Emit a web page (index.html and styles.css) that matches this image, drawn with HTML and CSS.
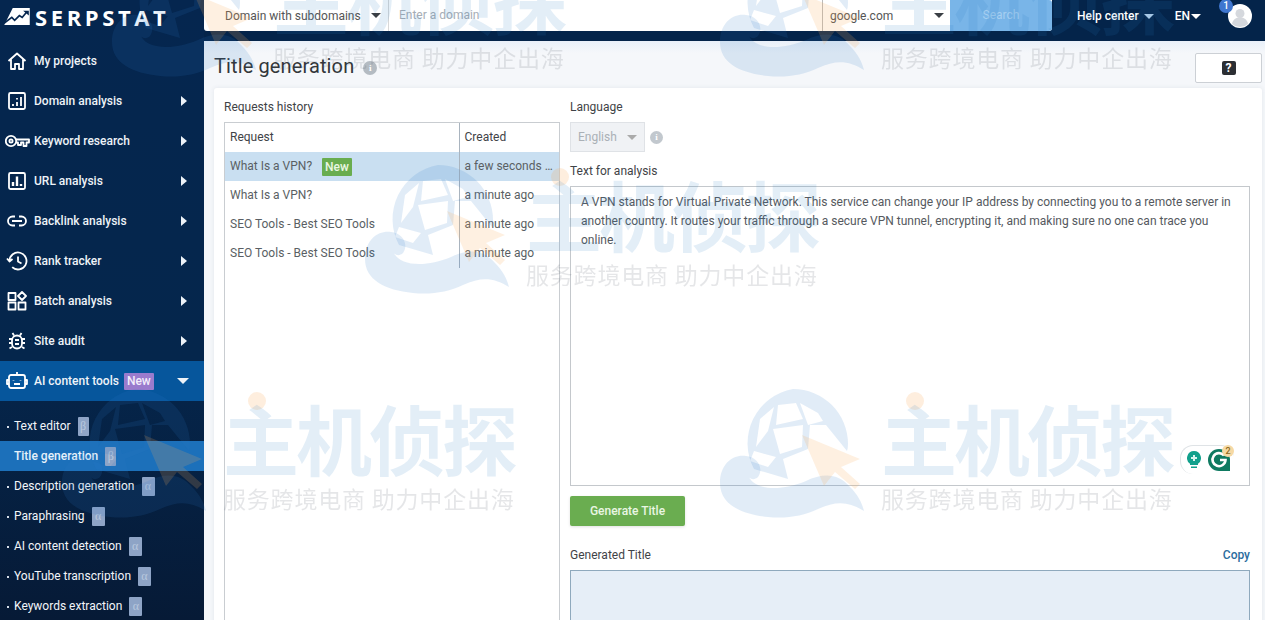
FILE: index.html
```html
<!DOCTYPE html>
<html lang="en">
<head>
<meta charset="utf-8">
<title>Title generation</title>
<link rel="stylesheet" href="styles.css">
</head>
<body>
<svg class="defs" width="0" height="0" aria-hidden="true">
  <symbol id="wm-globe" viewBox="0 0 155 130">
    <path class="wm-blue" fill-rule="evenodd" d="M75 0a55 55 0 0 1 55 55q0 4-1 7L108 36H92l-2 24-25 10 5 20-34-10a55 55 0 0 1 39-80zM42 30l14-12-6 24-12 16zM60 16l18-2 7 16-27 6zM82 14l18 10 5 8-15 4zM55 40l30-4-1 22-22 7zM36 62l22 6-8 10-18-6z"/>
    <path class="wm-blue" d="M2 94C2 75 15 65 28 67c12 1 18 13 12 21-4 4-10 2-10-3 3 15 30 19 58 7 17-8 32-8 44 6 8 8 12 16 14 24-16-10-28-10-46-2-15 7-32 10-50 8C22 125 2 115 2 94z"/>
    <path class="wm-orange" d="M84 46l58 24-19 8 19 17-5 5-20-17-11 14z"/>
  </symbol>
</svg>

<div class="app">
  <aside class="sidebar">
    <div class="logo">
      <svg class="logo-mark" viewBox="0 0 27 18"><path fill="#fff" d="M9 0h18v18H0z"/><path fill="none" stroke="#05264f" stroke-width="1.800" d="M0 16l8-6 3 3 5-5 3 2 5-6"/><path fill="#05264f" d="M20 3h6v5z"/></svg>
      <span class="logo-text">SERPSTAT</span>
    </div>
    <nav class="nav">
      <a class="nav-item">
        <span class="nav-icon"><svg viewBox="0 0 20 20"><path d="M1.500 10 10 2.500l8.500 7.500M4 8.500V18h4v-5h4v5h4V8.500"/></svg></span>
        <span class="nav-label">My projects</span>
      </a>
      <a class="nav-item">
        <span class="nav-icon"><svg viewBox="0 0 20 20"><rect x="2" y="2" width="16" height="16" rx="1.500"/><path d="M6 15v-2M10 15v-4M14 15V6M10 8.500V7"/></svg></span>
        <span class="nav-label">Domain analysis</span><i class="caret"></i>
      </a>
      <a class="nav-item">
        <span class="nav-icon nav-icon-wide"><svg viewBox="0 0 25 14"><circle cx="6" cy="7" r="5.200"/><circle cx="6" cy="7" r="1.600"/><path d="M11 5.500h13v3h-2.500V12h-3V8.500H16V11h-3V8.500h-2"/></svg></span>
        <span class="nav-label">Keyword research</span><i class="caret"></i>
      </a>
      <a class="nav-item">
        <span class="nav-icon"><svg viewBox="0 0 20 20"><rect x="2" y="2" width="16" height="16" rx="1.500"/><path class="thick" d="M6 15v-4M10 15V5.500M14 15v-2"/></svg></span>
        <span class="nav-label">URL analysis</span><i class="caret"></i>
      </a>
      <a class="nav-item">
        <span class="nav-icon"><svg viewBox="0 0 20 20"><path d="M8 5.500H5.500a4.500 4.500 0 0 0 0 9H8M12 5.500h2.500a4.500 4.500 0 0 1 0 9H12M5 10h10"/></svg></span>
        <span class="nav-label">Backlink analysis</span><i class="caret"></i>
      </a>
      <a class="nav-item">
        <span class="nav-icon nav-icon-mid"><svg viewBox="0 0 22 20"><path d="M3.500 10a8.500 8.500 0 1 1 2.700 6.200M1 7.500l2.500 3 3-2.500M12 5.500V10.500l3.500 2"/></svg></span>
        <span class="nav-label">Rank tracker</span><i class="caret"></i>
      </a>
      <a class="nav-item">
        <span class="nav-icon"><svg viewBox="0 0 20 20"><rect x="1.500" y="2" width="7" height="7"/><rect x="1.500" y="11.500" width="7" height="7"/><rect x="11.500" y="11.500" width="7" height="7"/><path d="m15 1 4 4-4 4-4-4z"/></svg></span>
        <span class="nav-label">Batch analysis</span><i class="caret"></i>
      </a>
      <a class="nav-item">
        <span class="nav-icon"><svg viewBox="0 0 20 20"><rect x="5" y="4.500" width="10" height="13" rx="5"/><path d="M7 4.500 5.500 2M13 4.500 14.500 2M5 8H2M15 8h3M5 12H2M15 12h3M5 16l-2.500 1.500M15 16l2.500 1.500M8 9h4M8 13h4"/></svg></span>
        <span class="nav-label">Site audit</span><i class="caret"></i>
      </a>
      <a class="nav-item nav-item-open">
        <span class="nav-icon nav-icon-mid"><svg viewBox="0 0 22 20"><rect x="3" y="4" width="16" height="13" rx="2"/><path d="M11 1v3M3 9H1v4h2M19 9h2v4h-2M7.500 9.500v.5M14.500 9.500v.5M8 13h6"/></svg></span>
        <span class="nav-label">AI content tools<b class="tag-new">New</b></span><i class="caret caret-down"></i>
      </a>
    </nav>
    <ul class="subnav">
      <li class="sub-item"><span>Text editor</span><em class="tag-ver tag-beta">β</em></li>
      <li class="sub-item sub-item-active"><span>Title generation</span><em class="tag-ver tag-beta">β</em></li>
      <li class="sub-item"><span>Description generation</span><em class="tag-ver">α</em></li>
      <li class="sub-item"><span>Paraphrasing</span><em class="tag-ver">α</em></li>
      <li class="sub-item"><span>AI content detection</span><em class="tag-ver">α</em></li>
      <li class="sub-item"><span>YouTube transcription</span><em class="tag-ver">α</em></li>
      <li class="sub-item"><span>Keywords extraction</span><em class="tag-ver">α</em></li>
    </ul>
  </aside>

  <div class="main">
    <header class="topbar">
      <div class="search-form">
        <div class="scope"><span>Domain with subdomains</span><i class="arrow"></i></div>
        <div class="domain">Enter a domain</div>
        <div class="engine"><span>google.com</span><i class="arrow"></i></div>
        <div class="search-btn">Search</div>
      </div>
      <div class="top-actions">
        <span class="top-link help">Help center<i class="arrow arrow-light"></i></span>
        <span class="top-link lang">EN<i class="arrow arrow-white"></i></span>
        <span class="avatar">
          <svg viewBox="0 0 24 24"><circle cx="12" cy="12" r="12" fill="#fff"/><circle cx="12" cy="9.500" r="4.500" fill="#d5d8dd"/><path fill="#d5d8dd" d="M4 20c1-5 4-6.500 8-6.500S19 15 20 20a12 12 0 0 1-16 0z"/></svg>
          <b class="avatar-badge">1</b>
        </span>
      </div>
    </header>

    <main class="content">
      <div class="title-row">
        <h1 class="page-title">Title generation</h1>
        <i class="info info-title">i</i>
        <button class="help-btn"><span>?</span></button>
      </div>

      <section class="card">
        <div class="col-left">
          <div class="label">Requests history</div>
          <div class="history">
            <table class="history-table">
              <thead>
                <tr><th class="col-req">Request</th><th class="col-created">Created</th></tr>
              </thead>
              <tbody>
                <tr class="row-active"><td class="col-req">What Is a VPN?<b class="tag-fresh">New</b></td><td class="col-created">a few seconds ago</td></tr>
                <tr><td class="col-req">What Is a VPN?</td><td class="col-created">a minute ago</td></tr>
                <tr><td class="col-req">SEO Tools - Best SEO Tools</td><td class="col-created">a minute ago</td></tr>
                <tr><td class="col-req">SEO Tools - Best SEO Tools</td><td class="col-created">a minute ago</td></tr>
              </tbody>
            </table>
          </div>
        </div>

        <div class="col-right">
          <div class="label">Language</div>
          <div class="lang-row">
            <div class="lang-select"><span>English</span><i class="arrow arrow-grey"></i></div>
            <i class="info">i</i>
          </div>
          <div class="label label-text">Text for analysis</div>
          <div class="analysis">
            A VPN stands for Virtual Private Network. This service can change your IP address by connecting you to a remote server in another country. It routes your traffic through a secure VPN tunnel, encrypting it, and making sure no one can trace you online.
            <div class="grammarly">
              <svg class="g-bulb" viewBox="0 0 14 18"><path fill="#11a08c" d="M7 0a7 7 0 0 1 4 12.700V14H3v-1.300A7 7 0 0 1 7 0zM4 15.500h6V17H4z"/><path fill="#d8f3ee" d="M6 4h2v2h2v2H8v2H6V8H4V6h2z"/></svg>
              <span class="g-logo">
                <svg viewBox="0 0 22 22"><path fill="#0f7a61" d="M11 0a11 11 0 0 1 11 11v11H11a11 11 0 0 1 0-22z"/><path fill="none" stroke="#fff" stroke-width="2.600" d="M16 6.500a6.500 6.500 0 1 0 1.500 4.500H12"/></svg>
                <b class="g-count">2</b>
              </span>
            </div>
          </div>
          <button class="generate">Generate Title</button>
          <div class="label-row">
            <span class="label-plain">Generated Title</span>
            <a class="copy">Copy</a>
          </div>
          <div class="result"></div>
        </div>
      </section>
    </main>
  </div>
</div>

<div class="watermarks" aria-hidden="true">
  <div class="wm wm-a"><svg class="wm-mark"><use href="#wm-globe"/></svg><i class="wm-dot"></i><div class="wm-text"><div class="wm-main">主机侦探</div><div class="wm-sub">服务跨境电商 助力中企出海</div></div></div>
  <div class="wm wm-b"><svg class="wm-mark"><use href="#wm-globe"/></svg><i class="wm-dot"></i><div class="wm-text"><div class="wm-main">主机侦探</div><div class="wm-sub">服务跨境电商 助力中企出海</div></div></div>
  <div class="wm wm-c"><svg class="wm-mark"><use href="#wm-globe"/></svg><i class="wm-dot"></i><div class="wm-text"><div class="wm-main">主机侦探</div><div class="wm-sub">服务跨境电商 助力中企出海</div></div></div>
  <div class="wm wm-d"><svg class="wm-mark"><use href="#wm-globe"/></svg><i class="wm-dot"></i><div class="wm-text"><div class="wm-main">主机侦探</div><div class="wm-sub">服务跨境电商 助力中企出海</div></div></div>
  <div class="wm wm-e"><svg class="wm-mark"><use href="#wm-globe"/></svg><i class="wm-dot"></i><div class="wm-text"><div class="wm-main">主机侦探</div><div class="wm-sub">服务跨境电商 助力中企出海</div></div></div>
</div>
</body>
</html>
```
FILE: styles.css
```css
* { box-sizing: border-box; }
html, body { margin: 0; height: 100%; overflow: hidden; }
body { font: 12px/16px Roboto, "Liberation Sans", sans-serif; color: #3c4043; background: #f4f6f9; }
.defs { position: absolute; }
.app { display: flex; height: 620px; overflow: hidden; }

/* sidebar */
.sidebar { width: 204px; flex: none; color: #fff; background: linear-gradient(#05264f 0, #05264c 360px, #061a36 100%); overflow: hidden; }
.logo { height: 41px; display: flex; align-items: flex-start; padding: 8px 0 0 4px; }
.logo-mark { width: 26px; height: 17px; }
.logo-text { font: 700 22px/18px "Open Sans", Roboto, sans-serif; letter-spacing: 3.600px; margin-left: 5px; }
.nav-item { height: 40px; display: flex; align-items: center; padding-right: 17px; font-weight: 500; color: #eef3f8; }
.nav-icon { width: 34px; flex: none; display: flex; justify-content: center; }
.nav-icon svg { width: 20px; height: 20px; fill: none; stroke: #fff; stroke-width: 1.800; stroke-linejoin: round; }
.nav-icon .thick { stroke-width: 2.400; }
.nav-icon-wide svg { width: 25px; }
.nav-icon-mid svg { width: 22px; }
.nav-label { flex: 1; white-space: nowrap; }
.caret { width: 0; height: 0; border-left: 6px solid #eef3f8; border-top: 5px solid transparent; border-bottom: 5px solid transparent; }
.caret-down { border-left: 6px solid transparent; border-right: 6px solid transparent; border-top: 6px solid #eef3f8; border-bottom: 0; margin-right: -2px; }
.nav-item-open { background: #06569c; }
.tag-new { display: inline-block; margin-left: 5px; padding: 0 3px; height: 17px; line-height: 17px; background: #9a7bcd; color: #f3edfb; font-weight: 500; border-radius: 1px; }
.subnav { list-style: none; margin: 0; padding: 10px 0 0; }
.sub-item { height: 30px; display: flex; align-items: center; padding-left: 14px; color: #f2f5f9; position: relative; white-space: nowrap; }
.sub-item::before { content: ""; position: absolute; left: 7px; top: 15px; width: 2px; height: 2px; background: #d5dde8; }
.sub-item-active { background: #1c70ba; font-weight: 500; color: #e6f1fb; }
.sub-item-active::before { display: none; }
.tag-ver { width: 13px; height: 19px; margin-left: 7px; background: #8ea4c6; color: #b9c8de; font: 12px/19px "Liberation Serif", serif; text-align: center; border-radius: 1px; }
.tag-beta { width: 11px; }

/* top bar */
.main { flex: 1; min-width: 0; display: flex; flex-direction: column; }
.topbar { height: 41px; flex: none; display: flex; background: #04244a; color: #fff; }
.search-form { width: 848px; height: 31px; display: flex; background: #fff; color: #555; border-radius: 0 0 3px 3px; overflow: hidden; }
.scope { width: 184px; padding-left: 21px; display: flex; align-items: center; justify-content: space-between; padding-right: 7px; }
.domain { flex: 1; border-left: 1px solid #d8d8d8; padding-left: 10px; line-height: 31px; color: #a6adb5; }
.engine { width: 128px; border-left: 1px solid #bbb; padding: 0 6px 0 7px; display: flex; align-items: center; justify-content: space-between; }
.search-btn { width: 102px; background: #79b5e8; color: #a6cff1; text-align: center; line-height: 31px; border-radius: 0 3px 3px 0; }
.arrow { display: inline-block; width: 0; height: 0; border-left: 5px solid transparent; border-right: 5px solid transparent; border-top: 5px solid #3a3f45; }
.arrow-light { border-top-color: #b9d4ec; margin-left: 5px; }
.arrow-white { border-top-color: #fff; margin-left: 1px; }
.arrow-grey { border-top-color: #aaa; }
.top-actions { flex: 1; display: flex; align-items: flex-start; padding: 8px 0 0 25px; }
.top-link { white-space: nowrap; display: flex; align-items: center; height: 16px; font-weight: 500; }
.lang { margin-left: 21px; }
.avatar { position: relative; margin: -4px 0 0 27px; width: 24px; height: 24px; }
.avatar svg { width: 24px; height: 24px; display: block; }
.avatar-badge { position: absolute; left: -9px; top: -5px; width: 14px; height: 14px; border-radius: 50%; background: #3f76cf; font: 500 10px/14px Roboto, sans-serif; text-align: center; }

/* content */
.content { flex: 1; min-height: 0; padding: 0 3px 0 10px; background: linear-gradient(#e9f0f9 0, #f5f7fa 12px); }
.title-row { height: 47px; display: flex; align-items: center; padding-top: 3px; }
.page-title { margin: 0; font: 400 20px/26px Roboto, sans-serif; color: #33373b; letter-spacing: .12px; }
.info { width: 14px; height: 14px; border-radius: 50%; background: #c2c8ce; color: #fff; font: 700 9px/14px "Liberation Serif", serif; text-align: center; display: block; flex: none; }
.info-title { margin: 3px 0 0 9px; background: #b4bbc2; }
.help-btn { margin: 4px 0 0 auto; width: 67px; height: 30px; background: #fff; border: 1px solid #ccd0d5; border-radius: 2px; padding: 0; display: flex; align-items: center; justify-content: center; }
.help-btn span { width: 14px; height: 14px; border-radius: 2px; background: #2b2e33; color: #fff; font: 700 12px/14px Roboto, sans-serif; }
.card { display: flex; gap: 10px; height: 600px; padding: 0 12px 0 10px; background: #fff; border-radius: 3px; box-shadow: 0 0 4px rgba(60, 80, 110, .1); }
.label { padding-top: 11px; margin-bottom: 7px; line-height: 16px; color: #3f4347; }
.col-left { width: 336px; flex: none; }
.col-right { flex: 1; min-width: 0; }
.history { height: 520px; border: 1px solid #c9cdd1; }
.history-table { width: 100%; table-layout: fixed; border-collapse: collapse; }
.history-table th, .history-table td { height: 29px; padding: 0 5px 2px; font-weight: 400; text-align: left; white-space: nowrap; overflow: hidden; text-overflow: ellipsis; color: #5a5f64; }
.history-table th { color: #3f4347; }
.col-req { width: 234px; }
.col-created { border-left: 1px solid #a9b4bf; }
.row-active td { background: #c9dff1; }
.history-table .row-active .col-req { padding-bottom: 0; }
.tag-fresh { display: inline-block; margin-left: 10px; padding: 0 3px; height: 18px; line-height: 18px; background: #69ad4f; color: #e9f7e2; font-weight: 500; border-radius: 1px; vertical-align: middle; }
.lang-row { display: flex; align-items: center; height: 30px; }
.lang-select { width: 75px; height: 30px; background: #f0f2f5; border: 1px solid #dfe2e6; padding: 0 7px; display: flex; align-items: center; justify-content: space-between; color: #aab0b6; }
.lang-row .info { margin-left: 5px; width: 13px; height: 13px; line-height: 13px; }
.analysis { position: relative; height: 300px; border: 1px solid #c4c8cc; padding: 6px 10px; line-height: 19px; color: #55595e; }
.grammarly { position: absolute; right: 15px; bottom: 11px; width: 54px; height: 29px; display: flex; align-items: center; gap: 7px; padding-left: 6px; background: #fff; border: 1px solid #dfe3e6; border-radius: 13px 13px 0 13px; border-right: 0; border-bottom: 0; }
.g-bulb { width: 14px; height: 18px; }
.g-logo { position: relative; width: 22px; height: 22px; }
.g-logo svg { width: 22px; height: 22px; display: block; }
.g-count { position: absolute; right: -4px; top: -4px; width: 12px; height: 12px; border-radius: 50%; background: #f6d9a4; color: #8d6a21; font: 500 9px/12px Roboto, sans-serif; text-align: center; }
.generate { display: block; margin-top: 10px; width: 115px; height: 30px; border: 0; padding: 0; background: #6aad50; color: #e9f6e3; font: 500 12px Roboto, sans-serif; border-radius: 2px; box-shadow: 0 1px 3px rgba(0, 0, 0, .12); }
.label-row { display: flex; justify-content: space-between; margin-top: 21px; line-height: 16px; }
.label-plain { color: #3f4347; }
.copy { color: #2b6d9e; font-weight: 500; }
.result { margin-top: 7px; height: 200px; background: #e6eef7; border: 1px solid #8fa9bd; }

/* watermark overlay */
.watermarks { position: fixed; inset: 0; overflow: hidden; pointer-events: none; }
.wm { position: absolute; width: 460px; height: 130px; }
.wm-a { left: 110px; top: -52px; }
.wm-b { left: 718px; top: -52px; }
.wm-c { left: 363px; top: 165px; }
.wm-d { left: 60px; top: 389px; }
.wm-e { left: 718px; top: 389px; }
.wm-mark { position: absolute; left: 0; top: 0; width: 155px; height: 130px; }
.wm-blue { fill: rgba(40, 120, 195, .14); }
.wm-orange { fill: rgba(250, 170, 90, .18); }
.wm-dot { position: absolute; left: 188px; top: 3px; width: 18px; height: 18px; border-radius: 50%; background: rgba(250, 170, 90, .2); }
.wm-text { position: absolute; left: 163px; top: 4px; width: 292px; font-family: "Noto Sans CJK SC", sans-serif; }
.wm-main { font-size: 76px; line-height: 88px; font-weight: 700; letter-spacing: -3px; color: rgba(40, 120, 195, .13); white-space: nowrap; }
.wm-sub { margin-top: 3px; font-size: 23px; line-height: 28px; letter-spacing: .8px; color: rgba(70, 80, 90, .14); white-space: nowrap; }
```
